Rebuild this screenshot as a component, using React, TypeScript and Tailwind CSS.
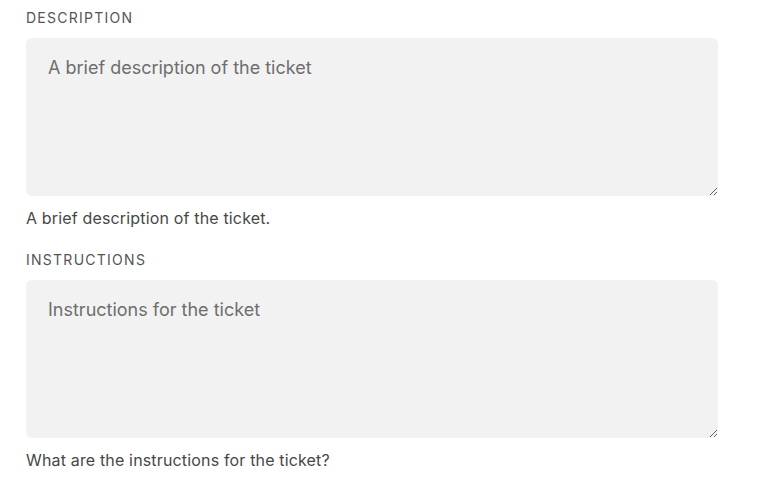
import React from 'react';

interface FieldProps {
  label: string;
  placeholder: string;
  help: string;
}

const Field: React.FC<FieldProps> = ({ label, placeholder, help }) => {
  return (
    <div className="flex flex-col pb-[22px]">
      <label className="text-[14px] leading-[20px] tracking-[0.09em] uppercase text-[#555555]">
        {label}
      </label>
      <textarea
        placeholder={placeholder}
        className="mt-[10px] h-[158px] w-[692px] rounded-[6px] bg-[#f2f2f2] px-[22px] pt-[18px] pb-[10px] text-[18px] leading-[24px] text-[#333] placeholder:text-[#6e6e6e] outline-none"
      />
      <p className="mt-[12px] text-[16px] leading-[20px] tracking-[0.01em] text-[#474747]">{help}</p>
    </div>
  );
};

export default function App() {
  return (
    <div
      className="min-h-screen bg-white pt-[8px] pl-[26px]"
      style={{ fontFamily: 'Inter, "Noto Sans", sans-serif' }}
    >
      <Field
        label="Description"
        placeholder="A brief description of the ticket"
        help="A brief description of the ticket."
      />
      <Field
        label="Instructions"
        placeholder="Instructions for the ticket"
        help="What are the instructions for the ticket?"
      />
    </div>
  );
}
